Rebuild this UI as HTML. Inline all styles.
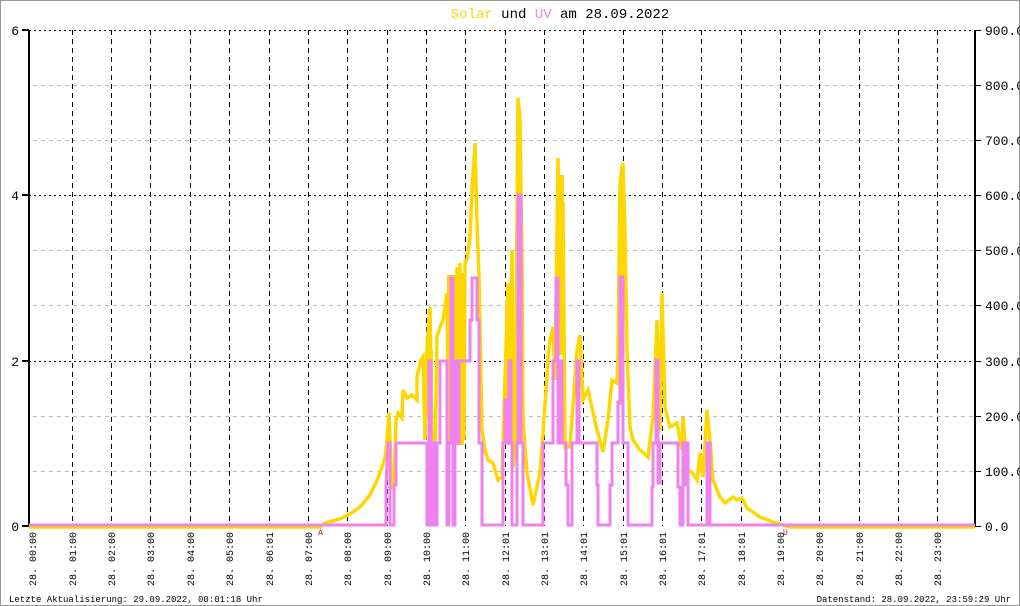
<!DOCTYPE html>
<html><head><meta charset="utf-8"><style>
html,body{margin:0;padding:0;background:#fff}
svg{display:block}
text{font-family:"Liberation Mono","DejaVu Sans Mono",monospace}
</style></head><body>
<svg width="1020" height="606" viewBox="0 0 1020 606" xmlns="http://www.w3.org/2000/svg">
<rect x="0.5" y="0.5" width="1019" height="605" fill="#fff" stroke="#999"/>
<text x="560" y="18" font-size="14" text-anchor="middle"><tspan fill="#FFD700">Solar</tspan> und <tspan fill="#EE82EE">UV</tspan> am 28.09.2022</text>
<g stroke="#bbb" stroke-width="1" stroke-dasharray="4,4" shape-rendering="crispEdges">
<line x1="33" y1="85.5" x2="975" y2="85.5"/><line x1="33" y1="140.5" x2="975" y2="140.5"/>
<line x1="33" y1="250.5" x2="975" y2="250.5"/><line x1="33" y1="305.5" x2="975" y2="305.5"/>
<line x1="33" y1="416.5" x2="975" y2="416.5"/><line x1="33" y1="471.5" x2="975" y2="471.5"/>
</g>
<g stroke="#000" stroke-width="1" stroke-dasharray="2,3" shape-rendering="crispEdges">
<line x1="29" y1="30.5" x2="975" y2="30.5"/><line x1="29" y1="195.5" x2="975" y2="195.5"/><line x1="29" y1="361.5" x2="975" y2="361.5"/>
</g>
<g stroke="#000" stroke-width="1" stroke-dasharray="5,4" shape-rendering="crispEdges">
<line x1="72.5" y1="30" x2="72.5" y2="526"/><line x1="111.5" y1="30" x2="111.5" y2="526"/><line x1="150.5" y1="30" x2="150.5" y2="526"/><line x1="190.5" y1="30" x2="190.5" y2="526"/><line x1="229.5" y1="30" x2="229.5" y2="526"/><line x1="269.5" y1="30" x2="269.5" y2="526"/><line x1="308.5" y1="30" x2="308.5" y2="526"/><line x1="347.5" y1="30" x2="347.5" y2="526"/><line x1="387.5" y1="30" x2="387.5" y2="526"/><line x1="426.5" y1="30" x2="426.5" y2="526"/><line x1="465.5" y1="30" x2="465.5" y2="526"/><line x1="505.5" y1="30" x2="505.5" y2="526"/><line x1="544.5" y1="30" x2="544.5" y2="526"/><line x1="583.5" y1="30" x2="583.5" y2="526"/><line x1="623.5" y1="30" x2="623.5" y2="526"/><line x1="662.5" y1="30" x2="662.5" y2="526"/><line x1="701.5" y1="30" x2="701.5" y2="526"/><line x1="741.5" y1="30" x2="741.5" y2="526"/><line x1="780.5" y1="30" x2="780.5" y2="526"/><line x1="819.5" y1="30" x2="819.5" y2="526"/><line x1="859.5" y1="30" x2="859.5" y2="526"/><line x1="898.5" y1="30" x2="898.5" y2="526"/><line x1="937.5" y1="30" x2="937.5" y2="526"/>
</g>
<g stroke="#000" stroke-width="2" shape-rendering="crispEdges">
<line x1="29" y1="30" x2="29" y2="527"/><line x1="975" y1="30" x2="975" y2="527"/>
<line x1="22" y1="30" x2="29" y2="30"/><line x1="22" y1="195" x2="29" y2="195"/><line x1="22" y1="361" x2="29" y2="361"/><line x1="22" y1="526" x2="29" y2="526"/>
</g>
<g stroke="#000" stroke-width="1" shape-rendering="crispEdges">
<line x1="975" y1="30.5" x2="981" y2="30.5"/><line x1="975" y1="85.5" x2="981" y2="85.5"/><line x1="975" y1="140.5" x2="981" y2="140.5"/><line x1="975" y1="195.5" x2="981" y2="195.5"/><line x1="975" y1="250.5" x2="981" y2="250.5"/><line x1="975" y1="305.5" x2="981" y2="305.5"/><line x1="975" y1="361.5" x2="981" y2="361.5"/><line x1="975" y1="416.5" x2="981" y2="416.5"/><line x1="975" y1="471.5" x2="981" y2="471.5"/><line x1="975" y1="526.5" x2="981" y2="526.5"/>
</g>
<g font-size="13" fill="#000" text-anchor="end">
<text x="19" y="35">6</text><text x="19" y="200">4</text><text x="19" y="366">2</text><text x="19" y="531">0</text>
</g>
<g font-size="13" fill="#000">
<text x="985" y="35">900.00</text><text x="985" y="90">800.00</text><text x="985" y="145">700.00</text><text x="985" y="200">600.00</text><text x="985" y="255">500.00</text><text x="985" y="310">400.00</text><text x="985" y="366">300.00</text><text x="985" y="421">200.00</text><text x="985" y="476">100.00</text><text x="985" y="531">0.0</text>
</g>
<g fill="#FFD700">
<rect x="447" y="275" width="17" height="170"/>
<rect x="428" y="350" width="5" height="90"/>
<rect x="505" y="300" width="7" height="145"/>
<rect x="517" y="110" width="4" height="200"/>
<rect x="619" y="175" width="5" height="230"/>
<rect x="556" y="175" width="8" height="180"/>
</g>
<polyline fill="none" stroke="#FFD700" stroke-width="3.5" stroke-linejoin="miter" points="29,527 320,527 325,523 340,519 350,514 360,507 370,495 378,478 385,458 387,440 389,413 390,440 392,488 394,488 396,420 398,413 402,418 403,390 407,398 412,395 417,400 417,377 421,360 423,357 425,440 427,347 430,307 432,437 435,463 437,337 440,327 443,320 447,293 448,377 450,300 452,297 453,283 455,397 457,267 458,440 460,263 461,420 462,273 464,440 465,262 467,260 470,237 472,190 475,143 477,223 479,277 482,430 485,450 488,460 493,463 498,480 502,477 505,377 507,320 508,283 510,400 512,250 513,467 515,450 518,98 520,120 522,262 523,420 527,473 533,505 540,473 543,433 547,377 548,357 550,340 553,327 555,380 558,158 560,330 563,202 565,447 570,447 577,350 580,335 583,400 588,390 597,430 603,452 608,420 612,380 617,383 618,353 620,183 622,167 623,163 625,233 627,350 630,427 633,440 640,450 648,457 653,417 657,320 660,430 662,293 665,407 670,427 677,423 682,450 683,417 687,470 692,472 697,480 700,453 703,477 707,410 710,440 713,480 720,497 725,503 733,497 737,500 742,498 747,508 760,517 773,522 783,525 790,527 975,527"/>
<polyline fill="none" stroke="#EE82EE" stroke-width="3" stroke-linejoin="miter" points="29,525 386,525 386,485 388,443 390,443 390,525 394,525 394,485 396,485 396,443 427,443 427,525 429,525 429,361 431,361 431,525 433,525 433,443 435,443 435,525 437,525 437,443 440,443 440,361 447,361 447,525 449,525 449,443 451,443 451,278 453,278 453,525 455,525 455,361 457,361 457,443 459,443 459,361 463,361 470,361 470,320 472,320 472,278 477,278 477,320 479,320 479,443 482,443 482,525 503,525 503,443 505,443 505,400 507,400 507,443 509,443 509,361 511,361 511,443 512,443 512,525 517,525 517,443 518,443 518,195 521,195 521,443 523,443 523,525 543,525 543,443 553,443 553,361 556,361 556,278 558,278 558,443 560,443 560,361 562,361 562,443 566,443 566,485 568,485 568,525 572,525 572,443 577,443 577,361 579,361 579,443 597,443 597,485 598,485 598,525 610,525 610,485 612,485 612,443 618,443 618,402 620,402 620,277 623,277 623,443 628,443 628,525 652,525 652,487 653,487 653,443 656,443 656,360 658,360 658,483 660,483 660,443 678,443 678,487 680,487 680,525 683,525 683,443 685,443 685,485 687,485 687,443 688,443 688,525 707,525 707,443 710,443 710,525 975,525"/>
<text x="318" y="535" font-size="8" fill="#e00">A</text>
<text x="783" y="535" font-size="8" fill="#e00">U</text>
<g font-size="10" fill="#000">
<text transform="translate(36,586) rotate(-90)">28. 00:00</text>
<text transform="translate(76,586) rotate(-90)">28. 01:00</text>
<text transform="translate(115,586) rotate(-90)">28. 02:00</text>
<text transform="translate(154,586) rotate(-90)">28. 03:00</text>
<text transform="translate(194,586) rotate(-90)">28. 04:00</text>
<text transform="translate(233,586) rotate(-90)">28. 05:00</text>
<text transform="translate(273,586) rotate(-90)">28. 06:01</text>
<text transform="translate(312,586) rotate(-90)">28. 07:00</text>
<text transform="translate(351,586) rotate(-90)">28. 08:00</text>
<text transform="translate(391,586) rotate(-90)">28. 09:00</text>
<text transform="translate(430,586) rotate(-90)">28. 10:00</text>
<text transform="translate(469,586) rotate(-90)">28. 11:00</text>
<text transform="translate(509,586) rotate(-90)">28. 12:01</text>
<text transform="translate(548,586) rotate(-90)">28. 13:01</text>
<text transform="translate(587,586) rotate(-90)">28. 14:01</text>
<text transform="translate(627,586) rotate(-90)">28. 15:01</text>
<text transform="translate(666,586) rotate(-90)">28. 16:01</text>
<text transform="translate(705,586) rotate(-90)">28. 17:01</text>
<text transform="translate(745,586) rotate(-90)">28. 18:01</text>
<text transform="translate(784,586) rotate(-90)">28. 19:00</text>
<text transform="translate(823,586) rotate(-90)">28. 20:00</text>
<text transform="translate(863,586) rotate(-90)">28. 21:00</text>
<text transform="translate(902,586) rotate(-90)">28. 22:00</text>
<text transform="translate(941,586) rotate(-90)">28. 23:00</text>
</g>
<text x="9" y="602" font-size="9" fill="#000">Letzte Aktualisierung: 29.09.2022, 00:01:18 Uhr</text>
<text x="1011" y="602" font-size="9" fill="#000" text-anchor="end">Datenstand: 28.09.2022, 23:59:29 Uhr</text>
</svg>
</body></html>
